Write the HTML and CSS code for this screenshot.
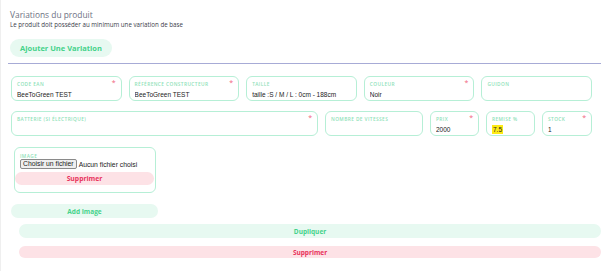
FILE: index.html
```html
<!DOCTYPE html>
<html lang="fr">
<head>
<meta charset="utf-8">
<title>Variations du produit</title>
<link rel="stylesheet" href="styles.css">
</head>
<body>
<div class="page">
  <div class="header">
    <h2 class="title">Variations du produit</h2>
    <p class="subtitle">Le produit doit posséder au minimum une variation de base</p>
    <button class="btn btn-green btn-add-variation">Ajouter Une Variation</button>
  </div>
  <div class="divider"></div>

  <div class="fields row1">
    <div class="field"><span class="label">Code EAN</span><span class="req">*</span><span class="value">BeeToGreen TEST</span></div>
    <div class="field"><span class="label">Référence constructeur</span><span class="req">*</span><span class="value">BeeToGreen TEST</span></div>
    <div class="field"><span class="label">Taille</span><span class="value">taille :S / M / L : 0cm - 188cm</span></div>
    <div class="field"><span class="label">Couleur</span><span class="req">*</span><span class="value">Noir</span></div>
    <div class="field"><span class="label">Guidon</span><span class="value"></span></div>
  </div>
  <div class="fields row2">
    <div class="field"><span class="label">Batterie (si électrique)</span><span class="req">*</span><span class="value"></span></div>
    <div class="field"><span class="label">Nombre de vitesses</span><span class="value"></span></div>
    <div class="field"><span class="label">Prix</span><span class="req">*</span><span class="value">2000</span></div>
    <div class="field"><span class="label">Remise %</span><span class="value"><mark class="hl">7.5</mark></span></div>
    <div class="field"><span class="label">Stock</span><span class="req">*</span><span class="value">1</span></div>
  </div>

  <div class="image-card">
    <span class="label">Image</span>
    <div class="file-row"><span class="file-btn">Choisir un fichier</span><span class="file-text">Aucun fichier choisi</span></div>
    <button class="btn btn-red btn-img-del">Supprimer</button>
  </div>

  <button class="btn btn-green btn-add-image">Add Image</button>
  <div class="actions">
    <button class="btn btn-green btn-wide">Dupliquer</button>
    <button class="btn btn-red btn-wide">Supprimer</button>
  </div>
</div>
</body>
</html>
```
FILE: styles.css
```css
html, body {
  margin: 0;
  padding: 0;
  background: #ffffff;
}
body {
  font-family: "Open Sans", "DejaVu Sans", sans-serif;
  width: 605px;
  height: 271px;
  overflow: hidden;
}
.page {
  border-left: 1px solid #efefef;
  height: 271px;
  box-sizing: border-box;
  padding: 0 4px 0 7px;
}
.header {
  padding: 9px 0 0 2px;
}
.title {
  margin: 0;
  font-size: 8.4px;
  font-weight: 400;
  color: #6d7183;
  line-height: 11px;
}
.subtitle {
  margin: 1px 0 0 0;
  font-size: 6.2px;
  line-height: 8px;
  color: #3b3d4a;
}
.btn {
  border: none;
  font-family: "Open Sans", "DejaVu Sans", sans-serif;
  font-weight: 700;
  border-radius: 10px;
  padding: 0;
  cursor: pointer;
  display: flex;
  align-items: center;
  justify-content: center;
}
.btn-green {
  background: #e7f9f1;
  color: #44d28a;
}
.btn-red {
  background: #fde2e6;
  color: #e8325b;
}
.btn-add-variation {
  margin-top: 10px;
  width: 102px;
  height: 18px;
  font-size: 7.5px;
  border-radius: 9px;
}
.divider {
  margin-top: 6px;
  height: 1px;
  background: #a7abd6;
}
.fields {
  display: grid;
  column-gap: 7px;
  margin: 0 9px 0 3px;
}
.row1 {
  margin-top: 12px;
  grid-template-columns: repeat(5, 1fr);
}
.row2 {
  margin-top: 10px;
  grid-template-columns: 307fr 98fr 49fr 49fr 50fr;
}
.field {
  position: relative;
  height: 25px;
  box-sizing: border-box;
  border: 1.5px solid #b6efd6;
  border-radius: 6px;
  padding: 4px 5px 0 5px;
  display: flex;
  flex-direction: column;
}
.label {
  font-size: 4.8px;
  line-height: 6px;
  font-weight: 600;
  letter-spacing: 0.4px;
  text-transform: uppercase;
  color: #8fdfb9;
  white-space: nowrap;
}
.req {
  position: absolute;
  top: 2px;
  right: 5px;
  font-size: 7px;
  line-height: 8px;
  color: #f1627d;
}
.value {
  margin-top: 3px;
  font-family: "Liberation Sans", Arial, sans-serif;
  font-size: 6.5px;
  line-height: 9px;
  color: #222222;
  white-space: nowrap;
  overflow: hidden;
}
.hl {
  background: #fdea15;
  color: #222222;
  padding: 1px 1px 2px 1px;
}
.image-card {
  margin: 11px 0 0 6px;
  width: 142px;
  height: 46px;
  box-sizing: border-box;
  border: 1.5px solid #b6efd6;
  border-radius: 6px;
  padding: 5px 0 0 0;
  display: flex;
  flex-direction: column;
}
.image-card .label {
  padding-left: 5px;
}
.file-row {
  display: flex;
  align-items: center;
  padding-left: 5px;
  font-family: "Liberation Sans", Arial, sans-serif;
  font-size: 6.8px;
  color: #222222;
}
.file-btn {
  background: #efefef;
  border: 1px solid #8a8a8a;
  border-radius: 2px;
  height: 8px;
  line-height: 8px;
  padding: 0 2px;
  margin-right: 2px;
}
.btn-img-del {
  margin-top: 3px;
  width: 139px;
  height: 13px;
  font-size: 6.8px;
  border-radius: 7px;
}
.btn-add-image {
  margin: 11px 0 0 3px;
  width: 147px;
  height: 14px;
  font-size: 6.5px;
  border-radius: 7px;
}
.actions {
  margin: 6px 0 0 11px;
  display: flex;
  flex-direction: column;
  row-gap: 8px;
}
.btn-wide {
  width: 100%;
  height: 14px;
  font-size: 6.5px;
  border-radius: 7px;
}
.actions .btn-red {
  height: 12px;
}
```
